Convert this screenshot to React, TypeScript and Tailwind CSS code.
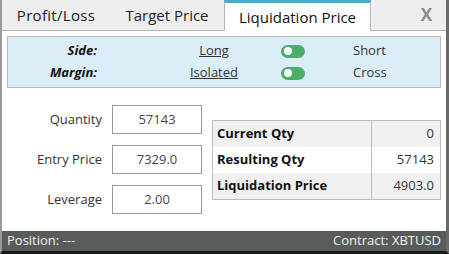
import React from 'react';

const font = { fontFamily: '"Open Sans", "Noto Sans", sans-serif' };

const Toggle = () => (
  <div className="w-[24px] h-[13px] rounded-full bg-[#4cae6a] flex items-center pl-[3px]">
    <div className="w-[8px] h-[8px] rounded-full bg-white" />
  </div>
);

const inputs = [
  { label: 'Quantity', value: '57143' },
  { label: 'Entry Price', value: '7329.0' },
  { label: 'Leverage', value: '2.00' },
];

const rows = [
  { label: 'Current Qty', value: '0', bg: 'bg-[#f0f0f0]' },
  { label: 'Resulting Qty', value: '57143', bg: 'bg-white' },
  { label: 'Liquidation Price', value: '4903.0', bg: 'bg-[#f0f0f0]' },
];

const options = [
  { label: 'Side:', left: 'Long', right: 'Short' },
  { label: 'Margin:', left: 'Isolated', right: 'Cross' },
];

export default function App() {
  return (
    <div
      className="w-[449px] h-[254px] flex flex-col bg-white border-l-2 border-l-[#9a9a9a] border-r-[3px] border-r-[#6a6a6a] border-b-[3px] border-b-[#1a1a1a] text-[#333]"
      style={font}
    >
      {/* Tabs */}
      <div className="h-[31px] flex bg-[#eeeeee] shrink-0">
        <div className="w-[104px] flex items-center justify-center border-b border-[#b5b5b5] text-[15px] text-[#222] pl-[4px] tracking-[0.3px]">
          Profit/Loss
        </div>
        <div className="w-[118px] flex items-center justify-center border-b border-[#b5b5b5] text-[15px] text-[#222] pl-[4px]">
          Target Price
        </div>
        <div className="w-[147px] flex items-center justify-center bg-white border-t-[3px] border-t-[#4aa9c9] border-x border-x-[#b5b5b5] text-[15px] text-[#111]">
          Liquidation Price
        </div>
        <div className="flex-1 flex items-center justify-end pr-[14px] border-b border-[#b5b5b5] text-[17px] font-bold text-[#8a8a8a]">
          X
        </div>
      </div>

      {/* Side / Margin */}
      <div className="mx-[5px] mt-[5px] h-[52px] bg-[#dbeef7] border border-[#b9b9b9] flex flex-col justify-center gap-[4px] text-[13px]">
        {options.map((o) => (
          <div key={o.label} className="flex items-center h-[18px]">
            <div className="w-[89px] text-right font-bold italic text-[#111]">{o.label}</div>
            <div className="ml-[87px] w-[60px] text-center underline">{o.left}</div>
            <div className="ml-[37px]"><Toggle /></div>
            <div className="ml-[48px]">{o.right}</div>
          </div>
        ))}
      </div>

      {/* Body */}
      <div className="flex-1 flex items-center pr-[5px]">
        <div className="flex flex-col gap-[11px] w-[210px]">
          {inputs.map((i) => (
            <div key={i.label} className="flex items-center">
              <div className="w-[100px] text-right text-[13px]">{i.label}</div>
              <div className="ml-[10px] w-[90px] h-[29px] border border-[#999] flex items-center justify-center text-[13px] text-[#445]">
                {i.value}
              </div>
            </div>
          ))}
        </div>
        <div className="flex-1 border border-[#bbbbbb] text-[13px]">
          {rows.map((r) => (
            <div key={r.label} className={`flex h-[26px] ${r.bg}`}>
              <div className="w-[159px] flex items-center pl-[4px] font-bold text-[#111] border-r border-[#bbbbbb]">
                {r.label}
              </div>
              <div className="flex-1 flex items-center justify-end pr-[6px]">{r.value}</div>
            </div>
          ))}
        </div>
      </div>

      {/* Status bar */}
      <div className="h-[20px] bg-[#575c5a] flex items-center justify-between px-[5px] text-[13px] text-[#f2f2f2] shrink-0">
        <span>Position: ---</span>
        <span>Contract: XBTUSD</span>
      </div>
    </div>
  );
}
